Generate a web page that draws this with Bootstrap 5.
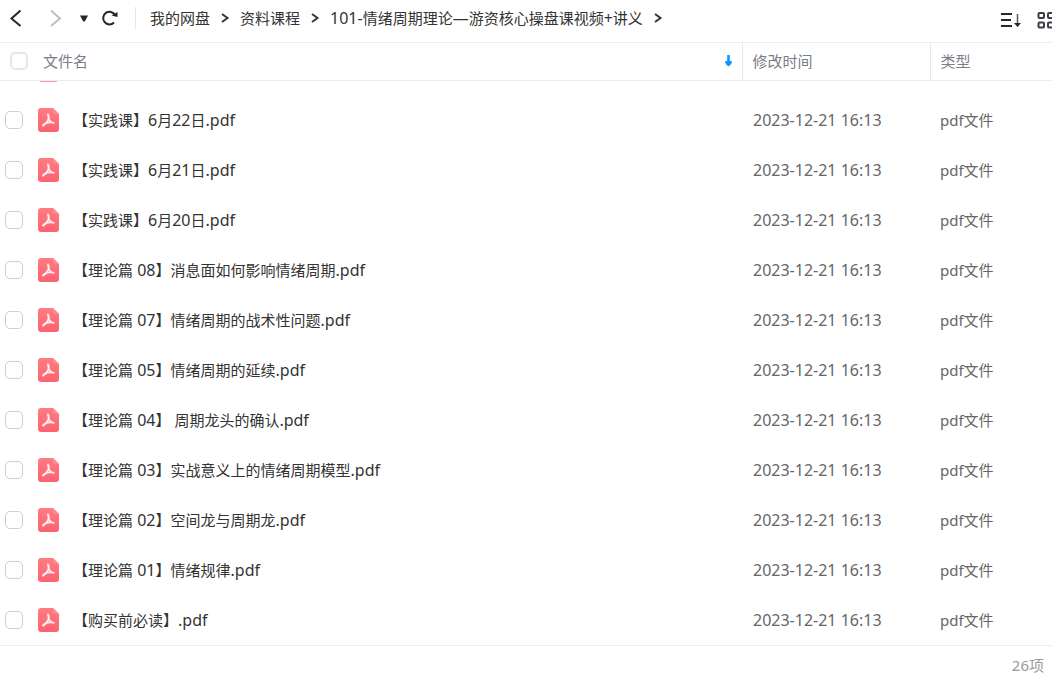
<!DOCTYPE html>
<html lang="zh-CN">
<head>
<meta charset="utf-8">
<meta name="viewport" content="width=device-width, initial-scale=1">
<title>我的网盘</title>
<link href="https://cdn.jsdelivr.net/npm/bootstrap@5.3.0/dist/css/bootstrap.min.css" rel="stylesheet">
<style>
body{font-family:"Noto Sans","Noto Sans CJK SC",sans-serif;font-size:15px;line-height:24px;color:#333;background:#fff}
.latin{font-size:16px}
.toolbar{height:43px;padding-bottom:7px;border-bottom:1px solid #ededed;color:#25262f}
.toolbar svg,.files svg{display:block}
.toolbar button{border:0;background:none;padding:0;color:inherit}
.toolbar .next{color:#bdbdbd;margin-left:24px}
.toolbar .history{margin-left:14px}
.toolbar .reload{margin-left:10px}
.split{width:1px;height:22px;background:#e6e6e6;margin:0 14px 0 15px}
.path a{color:#333;text-decoration:none;white-space:nowrap}
.path svg{margin:0 10px}
.tools{gap:15px;padding-top:5px;margin-right:-3px}
.files{table-layout:fixed}
.files th{font-weight:400;color:#7a7e88;height:37px;padding:0 10px;border-bottom:1px solid #ededed}
.files th+th{border-left:1px solid #e8e8e8}
.files th label{margin-left:15px}
.files .date{width:188px}
.files .type{width:122px}
.files td{height:50px;padding:0 10px;color:#666;white-space:nowrap}
.files td.latin{padding-left:11px}
.files td:first-child{padding-left:5px;color:#333}
.files .above td{height:15px;vertical-align:top;padding-left:40px}
.sliver{width:17px;height:1px;background:#f59ba3}
.form-check-input.pick{width:18px;height:18px;margin:0;border:1px solid #c9cfd4;border-radius:5px}
.form-check-input.pick-all{border:2px solid #e7e7e7}
.pdf-icon{margin-left:15px;margin-right:14px}
.status{border-top:1px solid #ededed;color:#999;padding:7px 8px 0}
</style>
</head>
<body>
<svg width="0" height="0" class="position-absolute" aria-hidden="true">
<defs>
<linearGradient id="red" x1="0" y1="0" x2="0" y2="1"><stop offset="0" stop-color="#ff7c83"/><stop offset="1" stop-color="#fd6270"/></linearGradient>
<symbol id="pdf" viewBox="0 0 21 24"><path d="M3 0H15L21 6V21Q21 24 18 24H3Q0 24 0 21V3Q0 0 3 0Z" fill="url(#red)"/><path d="M15 0L21 6H17Q15 6 15 4Z" fill="#ff8a91"/><g fill="none" stroke="#ffecee" stroke-linecap="round" stroke-linejoin="round"><path d="M10 6.500Q11.500 10 10 12.500Q8 16 5 17.500" stroke-width="2"/><path d="M10.500 11Q12.500 14.500 16 15M6.500 15.800Q11 13.800 15.500 14.800" stroke-width="1.600"/></g></symbol>
<symbol id="step" viewBox="0 0 10 12"><path d="M2 2L7.500 6L2 10" fill="none" stroke="#33343c" stroke-width="2"/></symbol>
</defs>
</svg>

<header class="toolbar d-flex align-items-center ps-2 overflow-hidden">
<button type="button" aria-label="后退"><svg width="16" height="18" viewBox="0 0 16 18"><path d="M12.500 1.500L3.500 9.500L12.500 17" fill="none" stroke="currentColor" stroke-width="2"/></svg></button>
<button type="button" class="next" aria-label="前进"><svg width="16" height="18" viewBox="0 0 16 18"><path d="M3 1.500L12 9.500L3 17" fill="none" stroke="currentColor" stroke-width="2"/></svg></button>
<button type="button" class="history" aria-label="历史"><svg width="12" height="12" viewBox="0 0 12 12"><path d="M2 3.500H10L6.800 9.500H5.200Z" fill="currentColor"/></svg></button>
<button type="button" class="reload" aria-label="刷新"><svg width="20" height="18" viewBox="0 0 20 18"><path d="M14 13.500A6.300 6.300 0 1 1 15 6" fill="none" stroke="currentColor" stroke-width="2"/><path d="M11.500 6.500L17.500 3V8Z" fill="currentColor"/></svg></button>
<div class="split"></div>
<nav class="path d-flex align-items-center" aria-label="路径">
<a href="#">我的网盘</a><svg width="10" height="12"><use href="#step"/></svg>
<a href="#">资料课程</a><svg width="10" height="12"><use href="#step"/></svg>
<a href="#"><span class="latin">101-</span>情绪周期理论<span class="latin">—</span>游资核心操盘课视频<span class="latin">+</span>讲义</a><svg width="10" height="12"><use href="#step"/></svg>
</nav>
<div class="tools d-flex align-items-center ms-auto">
<button type="button" aria-label="排序"><svg width="22" height="18" viewBox="0 0 22 18"><path d="M1 3H12M1 9H11M1 15H12" stroke="currentColor" stroke-width="2"/><path d="M17.500 3V14" stroke="#555760" stroke-width="1.500"/><path d="M14 12H21L17.500 16Z" fill="currentColor"/></svg></button>
<button type="button" aria-label="网格视图"><svg width="18" height="18" viewBox="0 0 18 18"><g fill="none" stroke="#3c3d46" stroke-width="2"><rect x="1.500" y="2" width="5.500" height="5" rx="1"/><rect x="11" y="2" width="5.500" height="5" rx="1"/><rect x="1.500" y="11.500" width="5.500" height="5" rx="1"/><rect x="11" y="11.500" width="5.500" height="5" rx="1"/></g></svg></button>
</div>
</header>

<table class="files w-100">
<thead>
<tr>
<th scope="col"><div class="d-flex align-items-center"><input class="form-check-input pick pick-all" type="checkbox" id="all"><label for="all">文件名</label><svg class="ms-auto" width="7" height="14" viewBox="0 0 7 14"><path d="M2.200 1H4.800V7H7L6.200 10L3.500 12.500L.8 10L0 7H2.200Z" fill="#0a98ff"/></svg></div></th>
<th scope="col" class="date">修改时间</th>
<th scope="col" class="type">类型</th>
</tr>
</thead>
<tbody>
<tr class="above"><td colspan="3"><div class="sliver"></div></td></tr>
<tr><td><div class="d-flex align-items-center"><input class="form-check-input pick" type="checkbox" id="f1"><svg class="pdf-icon" width="21" height="24"><use href="#pdf"/></svg><label for="f1">【实践课】<span class="latin">6</span>月<span class="latin">22</span>日<span class="latin">.pdf</span></label></div></td><td class="latin">2023-12-21 16:13</td><td>pdf文件</td></tr>
<tr><td><div class="d-flex align-items-center"><input class="form-check-input pick" type="checkbox" id="f2"><svg class="pdf-icon" width="21" height="24"><use href="#pdf"/></svg><label for="f2">【实践课】<span class="latin">6</span>月<span class="latin">21</span>日<span class="latin">.pdf</span></label></div></td><td class="latin">2023-12-21 16:13</td><td>pdf文件</td></tr>
<tr><td><div class="d-flex align-items-center"><input class="form-check-input pick" type="checkbox" id="f3"><svg class="pdf-icon" width="21" height="24"><use href="#pdf"/></svg><label for="f3">【实践课】<span class="latin">6</span>月<span class="latin">20</span>日<span class="latin">.pdf</span></label></div></td><td class="latin">2023-12-21 16:13</td><td>pdf文件</td></tr>
<tr><td><div class="d-flex align-items-center"><input class="form-check-input pick" type="checkbox" id="f4"><svg class="pdf-icon" width="21" height="24"><use href="#pdf"/></svg><label for="f4">【理论篇<span class="latin"> 08</span>】消息面如何影响情绪周期<span class="latin">.pdf</span></label></div></td><td class="latin">2023-12-21 16:13</td><td>pdf文件</td></tr>
<tr><td><div class="d-flex align-items-center"><input class="form-check-input pick" type="checkbox" id="f5"><svg class="pdf-icon" width="21" height="24"><use href="#pdf"/></svg><label for="f5">【理论篇<span class="latin"> 07</span>】情绪周期的战术性问题<span class="latin">.pdf</span></label></div></td><td class="latin">2023-12-21 16:13</td><td>pdf文件</td></tr>
<tr><td><div class="d-flex align-items-center"><input class="form-check-input pick" type="checkbox" id="f6"><svg class="pdf-icon" width="21" height="24"><use href="#pdf"/></svg><label for="f6">【理论篇<span class="latin"> 05</span>】情绪周期的延续<span class="latin">.pdf</span></label></div></td><td class="latin">2023-12-21 16:13</td><td>pdf文件</td></tr>
<tr><td><div class="d-flex align-items-center"><input class="form-check-input pick" type="checkbox" id="f7"><svg class="pdf-icon" width="21" height="24"><use href="#pdf"/></svg><label for="f7">【理论篇<span class="latin"> 04</span>】 周期龙头的确认<span class="latin">.pdf</span></label></div></td><td class="latin">2023-12-21 16:13</td><td>pdf文件</td></tr>
<tr><td><div class="d-flex align-items-center"><input class="form-check-input pick" type="checkbox" id="f8"><svg class="pdf-icon" width="21" height="24"><use href="#pdf"/></svg><label for="f8">【理论篇<span class="latin"> 03</span>】实战意义上的情绪周期模型<span class="latin">.pdf</span></label></div></td><td class="latin">2023-12-21 16:13</td><td>pdf文件</td></tr>
<tr><td><div class="d-flex align-items-center"><input class="form-check-input pick" type="checkbox" id="f9"><svg class="pdf-icon" width="21" height="24"><use href="#pdf"/></svg><label for="f9">【理论篇<span class="latin"> 02</span>】空间龙与周期龙<span class="latin">.pdf</span></label></div></td><td class="latin">2023-12-21 16:13</td><td>pdf文件</td></tr>
<tr><td><div class="d-flex align-items-center"><input class="form-check-input pick" type="checkbox" id="f10"><svg class="pdf-icon" width="21" height="24"><use href="#pdf"/></svg><label for="f10">【理论篇<span class="latin"> 01</span>】情绪规律<span class="latin">.pdf</span></label></div></td><td class="latin">2023-12-21 16:13</td><td>pdf文件</td></tr>
<tr><td><div class="d-flex align-items-center"><input class="form-check-input pick" type="checkbox" id="f11"><svg class="pdf-icon" width="21" height="24"><use href="#pdf"/></svg><label for="f11">【购买前必读】<span class="latin">.pdf</span></label></div></td><td class="latin">2023-12-21 16:13</td><td>pdf文件</td></tr>
</tbody>
</table>
<footer class="status text-end">26项</footer>
<script src="https://cdn.jsdelivr.net/npm/bootstrap@5.3.0/dist/js/bootstrap.bundle.min.js"></script>
</body>
</html>
